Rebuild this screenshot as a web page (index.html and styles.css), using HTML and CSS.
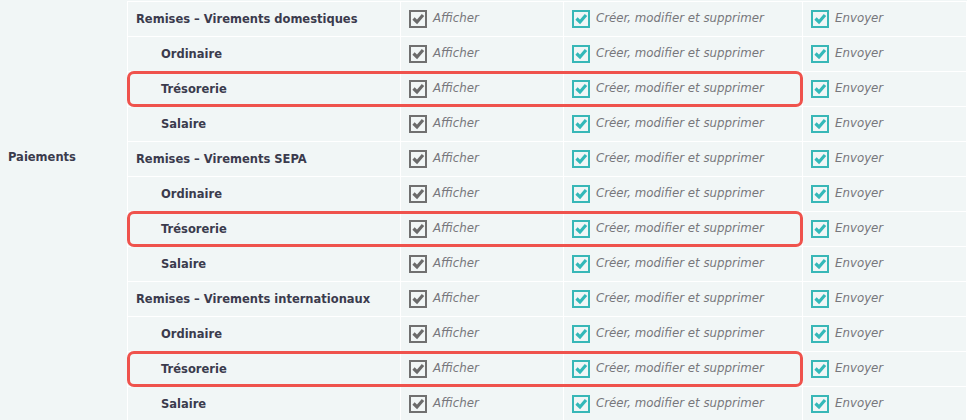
FILE: index.html
```html
<!DOCTYPE html>
<html lang="fr">
<head>
<meta charset="utf-8">
<title>Droits – Paiements</title>
<link rel="stylesheet" href="styles.css">
</head>
<body>
<div class="table">
  <div class="group-label">Paiements</div>
  <div class="rows">
    <div class="row">
      <div class="cell c1 title">Remises – Virements domestiques</div>
      <div class="cell c2"><span class="cb gray"><svg viewBox="0 0 14 14"><polyline points="2.5,6.5 6,10 12,3"/></svg></span><span class="lbl">Afficher</span></div>
      <div class="cell c3"><span class="cb teal"><svg viewBox="0 0 14 14"><polyline points="2.5,6.5 6,10 12,3"/></svg></span><span class="lbl">Créer, modifier et supprimer</span></div>
      <div class="cell c4"><span class="cb teal"><svg viewBox="0 0 14 14"><polyline points="2.5,6.5 6,10 12,3"/></svg></span><span class="lbl">Envoyer</span></div>
    </div>
    <div class="row">
      <div class="cell c1 sub">Ordinaire</div>
      <div class="cell c2"><span class="cb gray"><svg viewBox="0 0 14 14"><polyline points="2.5,6.5 6,10 12,3"/></svg></span><span class="lbl">Afficher</span></div>
      <div class="cell c3"><span class="cb teal"><svg viewBox="0 0 14 14"><polyline points="2.5,6.5 6,10 12,3"/></svg></span><span class="lbl">Créer, modifier et supprimer</span></div>
      <div class="cell c4"><span class="cb teal"><svg viewBox="0 0 14 14"><polyline points="2.5,6.5 6,10 12,3"/></svg></span><span class="lbl">Envoyer</span></div>
    </div>
    <div class="row">
      <div class="hl"></div>
      <div class="cell c1 sub">Trésorerie</div>
      <div class="cell c2"><span class="cb gray"><svg viewBox="0 0 14 14"><polyline points="2.5,6.5 6,10 12,3"/></svg></span><span class="lbl">Afficher</span></div>
      <div class="cell c3"><span class="cb teal"><svg viewBox="0 0 14 14"><polyline points="2.5,6.5 6,10 12,3"/></svg></span><span class="lbl">Créer, modifier et supprimer</span></div>
      <div class="cell c4"><span class="cb teal"><svg viewBox="0 0 14 14"><polyline points="2.5,6.5 6,10 12,3"/></svg></span><span class="lbl">Envoyer</span></div>
    </div>
    <div class="row">
      <div class="cell c1 sub">Salaire</div>
      <div class="cell c2"><span class="cb gray"><svg viewBox="0 0 14 14"><polyline points="2.5,6.5 6,10 12,3"/></svg></span><span class="lbl">Afficher</span></div>
      <div class="cell c3"><span class="cb teal"><svg viewBox="0 0 14 14"><polyline points="2.5,6.5 6,10 12,3"/></svg></span><span class="lbl">Créer, modifier et supprimer</span></div>
      <div class="cell c4"><span class="cb teal"><svg viewBox="0 0 14 14"><polyline points="2.5,6.5 6,10 12,3"/></svg></span><span class="lbl">Envoyer</span></div>
    </div>

    <div class="row">
      <div class="cell c1 title">Remises – Virements SEPA</div>
      <div class="cell c2"><span class="cb gray"><svg viewBox="0 0 14 14"><polyline points="2.5,6.5 6,10 12,3"/></svg></span><span class="lbl">Afficher</span></div>
      <div class="cell c3"><span class="cb teal"><svg viewBox="0 0 14 14"><polyline points="2.5,6.5 6,10 12,3"/></svg></span><span class="lbl">Créer, modifier et supprimer</span></div>
      <div class="cell c4"><span class="cb teal"><svg viewBox="0 0 14 14"><polyline points="2.5,6.5 6,10 12,3"/></svg></span><span class="lbl">Envoyer</span></div>
    </div>
    <div class="row">
      <div class="cell c1 sub">Ordinaire</div>
      <div class="cell c2"><span class="cb gray"><svg viewBox="0 0 14 14"><polyline points="2.5,6.5 6,10 12,3"/></svg></span><span class="lbl">Afficher</span></div>
      <div class="cell c3"><span class="cb teal"><svg viewBox="0 0 14 14"><polyline points="2.5,6.5 6,10 12,3"/></svg></span><span class="lbl">Créer, modifier et supprimer</span></div>
      <div class="cell c4"><span class="cb teal"><svg viewBox="0 0 14 14"><polyline points="2.5,6.5 6,10 12,3"/></svg></span><span class="lbl">Envoyer</span></div>
    </div>
    <div class="row">
      <div class="hl"></div>
      <div class="cell c1 sub">Trésorerie</div>
      <div class="cell c2"><span class="cb gray"><svg viewBox="0 0 14 14"><polyline points="2.5,6.5 6,10 12,3"/></svg></span><span class="lbl">Afficher</span></div>
      <div class="cell c3"><span class="cb teal"><svg viewBox="0 0 14 14"><polyline points="2.5,6.5 6,10 12,3"/></svg></span><span class="lbl">Créer, modifier et supprimer</span></div>
      <div class="cell c4"><span class="cb teal"><svg viewBox="0 0 14 14"><polyline points="2.5,6.5 6,10 12,3"/></svg></span><span class="lbl">Envoyer</span></div>
    </div>
    <div class="row">
      <div class="cell c1 sub">Salaire</div>
      <div class="cell c2"><span class="cb gray"><svg viewBox="0 0 14 14"><polyline points="2.5,6.5 6,10 12,3"/></svg></span><span class="lbl">Afficher</span></div>
      <div class="cell c3"><span class="cb teal"><svg viewBox="0 0 14 14"><polyline points="2.5,6.5 6,10 12,3"/></svg></span><span class="lbl">Créer, modifier et supprimer</span></div>
      <div class="cell c4"><span class="cb teal"><svg viewBox="0 0 14 14"><polyline points="2.5,6.5 6,10 12,3"/></svg></span><span class="lbl">Envoyer</span></div>
    </div>

    <div class="row">
      <div class="cell c1 title">Remises – Virements internationaux</div>
      <div class="cell c2"><span class="cb gray"><svg viewBox="0 0 14 14"><polyline points="2.5,6.5 6,10 12,3"/></svg></span><span class="lbl">Afficher</span></div>
      <div class="cell c3"><span class="cb teal"><svg viewBox="0 0 14 14"><polyline points="2.5,6.5 6,10 12,3"/></svg></span><span class="lbl">Créer, modifier et supprimer</span></div>
      <div class="cell c4"><span class="cb teal"><svg viewBox="0 0 14 14"><polyline points="2.5,6.5 6,10 12,3"/></svg></span><span class="lbl">Envoyer</span></div>
    </div>
    <div class="row">
      <div class="cell c1 sub">Ordinaire</div>
      <div class="cell c2"><span class="cb gray"><svg viewBox="0 0 14 14"><polyline points="2.5,6.5 6,10 12,3"/></svg></span><span class="lbl">Afficher</span></div>
      <div class="cell c3"><span class="cb teal"><svg viewBox="0 0 14 14"><polyline points="2.5,6.5 6,10 12,3"/></svg></span><span class="lbl">Créer, modifier et supprimer</span></div>
      <div class="cell c4"><span class="cb teal"><svg viewBox="0 0 14 14"><polyline points="2.5,6.5 6,10 12,3"/></svg></span><span class="lbl">Envoyer</span></div>
    </div>
    <div class="row">
      <div class="hl"></div>
      <div class="cell c1 sub">Trésorerie</div>
      <div class="cell c2"><span class="cb gray"><svg viewBox="0 0 14 14"><polyline points="2.5,6.5 6,10 12,3"/></svg></span><span class="lbl">Afficher</span></div>
      <div class="cell c3"><span class="cb teal"><svg viewBox="0 0 14 14"><polyline points="2.5,6.5 6,10 12,3"/></svg></span><span class="lbl">Créer, modifier et supprimer</span></div>
      <div class="cell c4"><span class="cb teal"><svg viewBox="0 0 14 14"><polyline points="2.5,6.5 6,10 12,3"/></svg></span><span class="lbl">Envoyer</span></div>
    </div>
    <div class="row">
      <div class="cell c1 sub">Salaire</div>
      <div class="cell c2"><span class="cb gray"><svg viewBox="0 0 14 14"><polyline points="2.5,6.5 6,10 12,3"/></svg></span><span class="lbl">Afficher</span></div>
      <div class="cell c3"><span class="cb teal"><svg viewBox="0 0 14 14"><polyline points="2.5,6.5 6,10 12,3"/></svg></span><span class="lbl">Créer, modifier et supprimer</span></div>
      <div class="cell c4"><span class="cb teal"><svg viewBox="0 0 14 14"><polyline points="2.5,6.5 6,10 12,3"/></svg></span><span class="lbl">Envoyer</span></div>
    </div>
  </div>
</div>
</body>
</html>
```

FILE: styles.css
```css
html, body {
  margin: 0;
  padding: 0;
  background: #f1f6f6;
}

body {
  font-family: "DejaVu Sans", Verdana, sans-serif;
  overflow: hidden;
}

.table {
  display: flex;
  width: 967px;
}

.group-label {
  width: 127px;
  flex: none;
  box-sizing: border-box;
  padding: 150px 0 0 8px;
  font-size: 11.5px;
  font-weight: bold;
  color: #3b3b4d;
}

.rows {
  flex: 1;
  display: flex;
  flex-direction: column;
  gap: 1px;
  background: #ffffff;
  margin-top: 1px;
  padding: 1px 1px 0 1px;
}

.row {
  display: grid;
  grid-template-columns: 272px 162px 238px 163px;
  grid-template-rows: 34px;
  column-gap: 1px;
}

.cell {
  grid-row: 1;
  background: #f1f6f6;
  display: flex;
  align-items: center;
  box-sizing: border-box;
  white-space: nowrap;
}

.c1 { grid-column: 1; padding-bottom: 1px; }
.c2 { grid-column: 2; padding-left: 8px; }
.c3 { grid-column: 3; padding-left: 8px; }
.c4 { grid-column: 4; padding-left: 8px; }

.title {
  padding-left: 8px;
  font-size: 11.5px;
  font-weight: bold;
  color: #3b3b4d;
}

.sub {
  padding-left: 33px;
  font-size: 11.5px;
  font-weight: bold;
  color: #3b3b4d;
}

.cb {
  width: 18px;
  height: 18px;
  box-sizing: border-box;
  border: 2px solid #707070;
  display: flex;
  align-items: center;
  justify-content: center;
  flex: none;
  margin-right: 6px;
}

.cb svg {
  width: 14px;
  height: 14px;
  display: block;
}

.cb polyline {
  fill: none;
  stroke-width: 3.2;
  stroke-linecap: butt;
  stroke-linejoin: miter;
}

.cb.gray { border-color: #707070; }
.cb.gray polyline { stroke: #6b6b6b; }

.cb.teal { border-color: #38b7b7; }
.cb.teal polyline { stroke: #33b9b9; }

.lbl {
  font-size: 11.8px;
  font-style: italic;
  color: #77777c;
  padding-bottom: 2px;
}

.hl {
  grid-row: 1;
  grid-column: 1 / 4;
  margin: -1px;
  border: 3px solid #ef524c;
  border-radius: 7px;
  z-index: 1;
  pointer-events: none;
}
```
